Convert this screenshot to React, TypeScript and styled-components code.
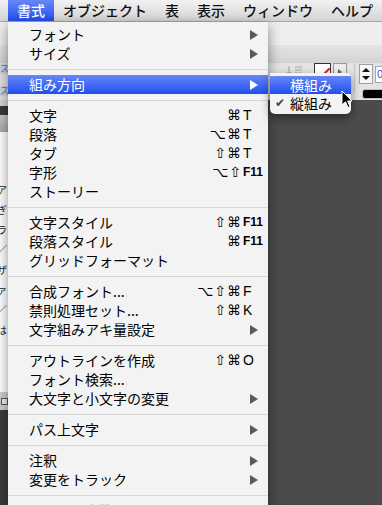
import React from "react";
import styled, { createGlobalStyle } from "styled-components";

const JP = `"Noto Sans CJK JP", "Noto Sans", sans-serif`;
const SYM = `"DejaVu Sans", "Noto Sans CJK JP", sans-serif`;
const LAT = `"Liberation Sans", "DejaVu Sans", sans-serif`;

const GlobalStyle = createGlobalStyle`
  html, body { margin: 0; padding: 0; background: #4a4a4a; }
  body { width: 382px; height: 505px; overflow: hidden; }
`;

const Screen = styled.div`
  position: relative;
  width: 382px;
  height: 505px;
  overflow: hidden;
  display: flex;
  flex-direction: column;
  font-family: ${JP};
  background: #4a4a4a;
`;

const MenuBar = styled.div`
  flex: none;
  height: 21px;
  display: flex;
  align-items: stretch;
  padding-left: 8px;
  background: linear-gradient(#f2f2f2, #d4d4d4);
  border-bottom: 1px solid #a8a8a8;
`;

const MenuTitle = styled.div<{ $active?: boolean }>`
  padding: 0 9px;
  font-size: 14px;
  font-weight: 500;
  line-height: 21px;
  white-space: nowrap;
  color: ${(p) => (p.$active ? "#fff" : "#111")};
  background: ${(p) => (p.$active ? "linear-gradient(#6787f8, #1f4fee)" : "transparent")};
`;

const Workspace = styled.div`
  flex: 1;
  display: flex;
  flex-direction: column;
  min-height: 0;
`;

const WindowTop = styled.div`
  flex: none;
  height: 23px;
  background: #eeeeee;
`;

const ToolbarUpper = styled.div`
  flex: none;
  height: 18px;
  background: linear-gradient(#e4e4e4, #d3d3d3);
`;

const Toolbar = styled.div`
  flex: none;
  height: 37px;
  display: grid;
  grid-template-columns: 8px 1fr 100px;
  background: #e3e3e3;
`;

const LeftTools = styled.div`
  display: flex;
  flex-direction: column;
  gap: 12px;
  padding-top: 1px;
`;

const TinyTool = styled.div`
  width: 8px;
  height: 10px;
  background: #d0d4dc;
  color: #3d6fd8;
  font-size: 9px;
  line-height: 10px;
  overflow: hidden;
`;

const RightTools = styled.div`
  grid-column: 3;
  display: flex;
  align-items: flex-start;
  overflow: hidden;
`;

const AlignIcons = styled.svg`
  flex: none;
  margin: 2px 0 0 3px;
`;

const Swatch = styled.div`
  flex: none;
  width: 15px;
  height: 15px;
  margin-left: 11px;
  border: 1px solid #333;
  background: #fff;
  overflow: hidden;
`;

const SmallButton = styled.div`
  flex: none;
  width: 12px;
  height: 15px;
  margin-left: 2px;
  border: 1px solid #9a9a9a;
  background: #ececec;
  display: flex;
  align-items: center;
  justify-content: center;
`;

const ToolSep = styled.div`
  flex: none;
  width: 1px;
  height: 30px;
  margin: 0 4px 0 7px;
  background: #c4c4c4;
`;

const FieldColumn = styled.div`
  flex: none;
  display: flex;
  flex-direction: column;
  gap: 5px;
  padding-top: 1px;
`;

const StepRow = styled.div`
  display: flex;
  align-items: center;
  gap: 2px;
`;

const Stepper = styled.div`
  width: 12px;
  height: 18px;
  border: 1px solid #a0a0a0;
  background: #f6f6f6;
  display: flex;
  align-items: center;
  justify-content: center;
`;

const NumField = styled.div`
  width: 20px;
  height: 15px;
  border: 1px solid #9aa8c0;
  background: #fff;
  color: #2c5bd6;
  font-family: ${LAT};
  font-size: 11px;
  line-height: 15px;
  padding-left: 1px;
`;

const StrokeField = styled.div`
  width: 28px;
  height: 8px;
  margin-left: 3px;
  border: 1px solid #bdbdbd;
  border-radius: 3px;
  background: #000;
`;

const Content = styled.div`
  flex: 1;
  display: flex;
  min-height: 0;
`;

const DocWindow = styled.div`
  flex: none;
  width: 240px;
  display: flex;
  flex-direction: column;
`;

const DocBand = styled.div<{ $h: number; $bg: string }>`
  flex: none;
  height: ${(p) => p.$h}px;
  background: ${(p) => p.$bg};
`;

const DocPage = styled.div`
  flex: none;
  height: 260px;
  background: #fff;
  display: flex;
  flex-direction: column;
  gap: 9px;
  padding-top: 52px;
  box-sizing: border-box;
  font-size: 10px;
  line-height: 11px;
  color: #222;
  overflow: hidden;
`;

const DocGlyph = styled.span`
  display: block;
  margin-left: -3px;
`;

const DocFooter = styled.div`
  flex: none;
  height: 18px;
  background: #cfcfcf;
  display: flex;
  align-items: center;
  padding-left: 1px;
`;

const DocDark = styled.div`
  flex: 1;
  background: #3d3d3d;
`;

const Pasteboard = styled.div`
  flex: 1;
  background: #4b4b4b;
`;

const Menu = styled.div`
  position: absolute;
  left: 8px;
  top: 22px;
  width: 260px;
  height: 500px;
  padding-top: 3px;
  box-sizing: border-box;
  background: #f3f3f3;
  box-shadow: 0 4px 12px rgba(0, 0, 0, 0.45);
`;

const Row = styled.div<{ $active?: boolean; $disabled?: boolean }>`
  display: flex;
  align-items: center;
  height: 19px;
  padding: 0 3px 0 21px;
  font-size: 14px;
  line-height: 19px;
  white-space: nowrap;
  color: ${(p) => (p.$active ? "#fff" : p.$disabled ? "#a8a8a8" : "#000")};
  background: ${(p) => (p.$active ? "linear-gradient(#6787f8, #1f4fee)" : "transparent")};
`;

const Label = styled.span`
  flex: 1;
`;

const Mods = styled.span`
  width: 60px;
  text-align: right;
  font-family: ${SYM};
  font-size: 14px;
  letter-spacing: 1px;
`;

const Key = styled.span<{ $small?: boolean }>`
  width: 22px;
  padding-left: 1px;
  font-family: ${LAT};
  font-size: ${(p) => (p.$small ? 12 : 14)}px;
  font-weight: ${(p) => (p.$small ? 700 : 400)};
`;

const Arrow = styled.svg`
  flex: none;
  margin-right: 7px;
`;

const Separator = styled.div`
  height: 1px;
  margin: 6px 0 5px;
  background: #d8d8d8;
`;

const Submenu = styled.div`
  position: absolute;
  left: 270px;
  top: 73px;
  width: 81px;
  padding: 3px 0 2px;
  box-sizing: border-box;
  background: #f3f3f3;
  border-radius: 0 4px 5px 5px;
  box-shadow: 0 4px 10px rgba(0, 0, 0, 0.45);
`;

const SubRow = styled.div<{ $active?: boolean }>`
  display: flex;
  align-items: center;
  height: 18px;
  font-size: 14px;
  line-height: 18px;
  white-space: nowrap;
  color: ${(p) => (p.$active ? "#fff" : "#000")};
  background: ${(p) => (p.$active ? "linear-gradient(#6787f8, #1f4fee)" : "transparent")};
`;

const Check = styled.span`
  width: 20px;
  flex: none;
  padding-left: 5px;
  box-sizing: border-box;
  font-family: ${SYM};
  font-size: 12px;
  color: #444;
`;

const Cursor = styled.svg`
  position: absolute;
  left: 341px;
  top: 90px;
`;

type Entry =
  | "sep"
  | {
      label: string;
      mods?: string;
      keyText?: string;
      small?: boolean;
      sub?: boolean;
      active?: boolean;
      disabled?: boolean;
    };

const entries: Entry[] = [
  { label: "フォント", sub: true },
  { label: "サイズ", sub: true },
  "sep",
  { label: "組み方向", sub: true, active: true },
  "sep",
  { label: "文字", mods: "⌘", keyText: "T" },
  { label: "段落", mods: "⌥⌘", keyText: "T" },
  { label: "タブ", mods: "⇧⌘", keyText: "T" },
  { label: "字形", mods: "⌥⇧", keyText: "F11", small: true },
  { label: "ストーリー" },
  "sep",
  { label: "文字スタイル", mods: "⇧⌘", keyText: "F11", small: true },
  { label: "段落スタイル", mods: "⌘", keyText: "F11", small: true },
  { label: "グリッドフォーマット" },
  "sep",
  { label: "合成フォント...", mods: "⌥⇧⌘", keyText: "F" },
  { label: "禁則処理セット...", mods: "⇧⌘", keyText: "K" },
  { label: "文字組みアキ量設定", sub: true },
  "sep",
  { label: "アウトラインを作成", mods: "⇧⌘", keyText: "O" },
  { label: "フォント検索..." },
  { label: "大文字と小文字の変更", sub: true },
  "sep",
  { label: "パス上文字", sub: true },
  "sep",
  { label: "注釈", sub: true },
  { label: "変更をトラック", sub: true },
  "sep",
  { label: "テキスト変数", disabled: true },
];

const titles = ["書式", "オブジェクト", "表", "表示", "ウィンドウ", "ヘルプ"];

function SubArrow({ light }: { light?: boolean }) {
  return (
    <Arrow width="8" height="10" viewBox="0 0 8 10">
      <polygon points="0,0 8,5 0,10" fill={light ? "#fff" : "#5a5a5a"} />
    </Arrow>
  );
}

export default function App() {
  return (
    <>
      <GlobalStyle />
      <Screen>
        <MenuBar>
          {titles.map((t, i) => (
            <MenuTitle key={t} $active={i === 0}>
              {t}
            </MenuTitle>
          ))}
        </MenuBar>
        <Workspace>
          <WindowTop />
          <ToolbarUpper />
          <Toolbar>
            <LeftTools>
              <TinyTool>ス</TinyTool>
              <TinyTool>ス</TinyTool>
            </LeftTools>
            <RightTools>
              <AlignIcons width="18" height="9" viewBox="0 0 18 9">
                <path d="M1 8h6M4 1v7" stroke="#9c9c9c" strokeWidth="1" fill="none" />
                <path d="M10 2h7M10 5h7M10 8h7" stroke="#a8a8a8" strokeWidth="1" fill="none" />
              </AlignIcons>
              <Swatch>
                <svg width="15" height="15" viewBox="0 0 15 15">
                  <line x1="0" y1="15" x2="15" y2="0" stroke="#e0202a" strokeWidth="2" />
                </svg>
              </Swatch>
              <SmallButton>
                <svg width="4" height="6" viewBox="0 0 4 6">
                  <polygon points="0,0 4,3 0,6" fill="#666" />
                </svg>
              </SmallButton>
              <ToolSep />
              <FieldColumn>
                <StepRow>
                  <Stepper>
                    <svg width="8" height="14" viewBox="0 0 8 14">
                      <polygon points="4,1 8,5 0,5" fill="#111" />
                      <polygon points="0,9 8,9 4,13" fill="#111" />
                    </svg>
                  </Stepper>
                  <NumField>0</NumField>
                </StepRow>
                <StrokeField />
              </FieldColumn>
            </RightTools>
          </Toolbar>
          <Content>
            <DocWindow>
              <DocBand $h={6} $bg="#d6d6d6" />
              <DocBand $h={9} $bg="#3a3a3a" />
              <DocBand $h={17} $bg="linear-gradient(#c9c9c9, #a9a9a9)" />
              <DocPage>
                <DocGlyph>ア</DocGlyph>
                <DocGlyph>ぎ</DocGlyph>
                <DocGlyph>ラ</DocGlyph>
                <DocGlyph>／</DocGlyph>
                <DocGlyph>ザ</DocGlyph>
                <DocGlyph>ァ</DocGlyph>
                <DocGlyph>／</DocGlyph>
                <DocGlyph>は</DocGlyph>
              </DocPage>
              <DocFooter>
                <svg width="7" height="7" viewBox="0 0 7 7">
                  <rect x="0.5" y="0.5" width="6" height="6" fill="#eee" stroke="#555" />
                </svg>
              </DocFooter>
              <DocDark />
            </DocWindow>
            <Pasteboard />
          </Content>
        </Workspace>

        <Menu>
          {entries.map((e, i) =>
            e === "sep" ? (
              <Separator key={i} />
            ) : (
              <Row key={i} $active={e.active} $disabled={e.disabled}>
                <Label>{e.label}</Label>
                {e.mods && <Mods>{e.mods}</Mods>}
                {e.keyText && <Key $small={e.small}>{e.keyText}</Key>}
                {e.sub && <SubArrow light={e.active} />}
              </Row>
            )
          )}
        </Menu>

        <Submenu>
          <SubRow $active>
            <Check />
            横組み
          </SubRow>
          <SubRow>
            <Check>✔</Check>
            縦組み
          </SubRow>
        </Submenu>

        <Cursor width="12" height="19" viewBox="0 0 12 19">
          <path
            d="M1 1 L1 15 L4.5 11.8 L7 17.5 L9 16.6 L6.6 11 L11 11 Z"
            fill="#000"
            stroke="#fff"
            strokeWidth="1"
            strokeLinejoin="round"
          />
        </Cursor>
      </Screen>
    </>
  );
}
